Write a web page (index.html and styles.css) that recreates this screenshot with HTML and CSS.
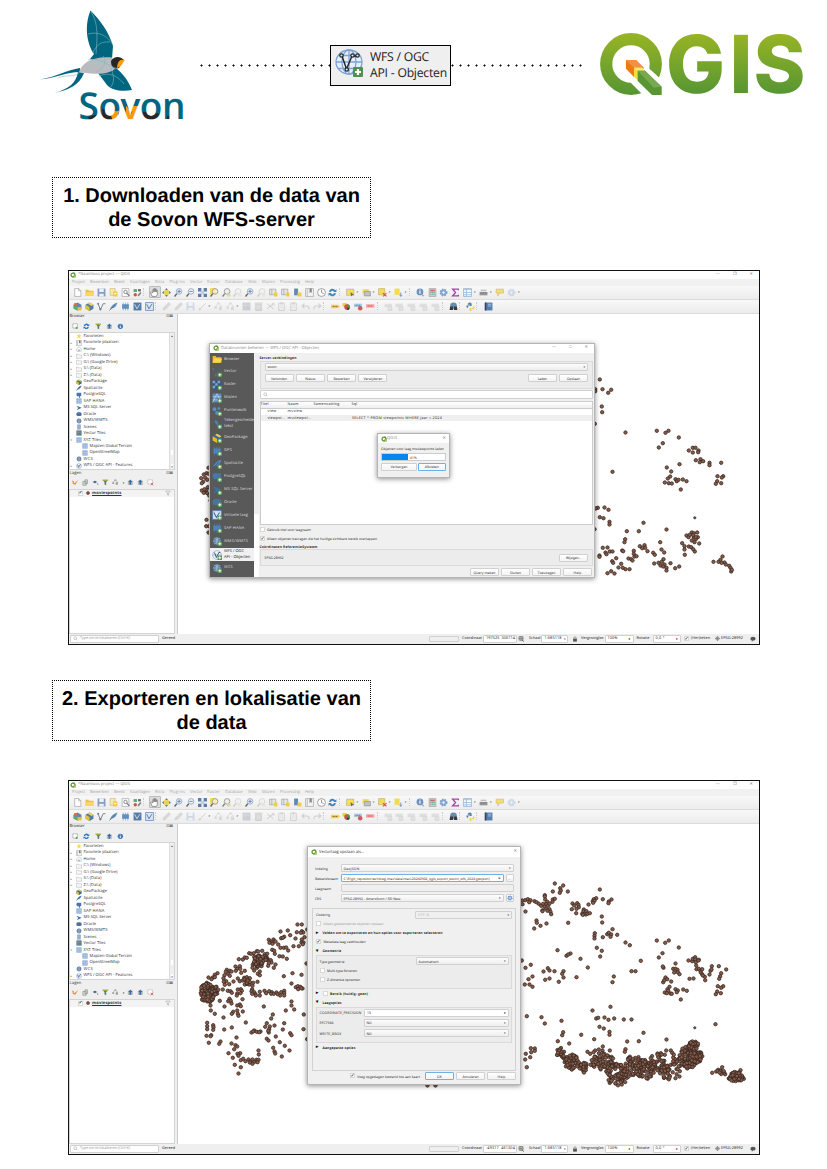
FILE: index.html
```html
<!DOCTYPE html>
<html lang="nl">
<head>
<meta charset="utf-8">
<title>Sovon WFS in QGIS</title>
<link rel="stylesheet" href="styles.css">
</head>
<body>
<header class="top">
  <svg class="sovon" viewBox="38 6 150 118">
    <defs>
      <pattern id="word" patternUnits="userSpaceOnUse" x="70" y="80" width="130" height="50">
        <path d="M0 0h130v50H0z" fill="#00667f"/>
        <path d="M38 31h8v12h-8zM44 32l7-2v12h-7zM56 26h12v16H56zM82 33h4v8h-4z" fill="#f79a0c"/>
        <path d="M18 37l10-3v8H20zM32 29h7l4 13H33zM50 28l-2 7 4 1 2-6zM56 25l6 9-3-11zM73 32l9 0 8 2-2 7H75zM97 36h5v5h-5z" fill="#2a2626"/>
      </pattern>
    </defs>
    <path d="M90.500 10.500C84 26 87 44 94 54L90 59c9 3 17 3 22 0L113 46C109 32 100 20 90.500 10.500z" fill="#00667f"/>
    <path d="M40 79.500C56 77 67 70 80 68L80 72C66 72 56 78 40 79.500zM54 93C69 89 76 83 78 72L84 73C79 86 68 90 54 93z" fill="#00667f"/>
    <path d="M98 73L116 68C123 74 128 80 132 90C122 92 111 90 107 85z" fill="#00667f"/>
    <path d="M79 72C82 63 92 56 112 57.500L117 67C110 75 96 75 79 72z" fill="#b8bcc1"/>
    <path d="M111 61C114 56 120 56 124 60L119 68C114 70 111 67 111 61z" fill="#262626"/>
    <path d="M117 67C118 60 121 59 125 60C122 62 123 66 117 68z" fill="#f79a0c"/>
    <path d="M91 12C99 23 97 40 96 54M88 34C99 31 108 36 113 45M93 53C98 41 105 42 110 42M88 60C100 57 106 65 118 69M96 72C105 69 107 60 103 56M99 76C109 72 117 75 124 84M110 88C116 81 113 74 111 68M58 78C66 74 73 78 79 73" fill="none" stroke="#7fb5c0" stroke-width=".6"/>
    <text class="sovon-word" x="78.500" y="118.500" textLength="107" fill="url(#word)">Sovon</text>
  </svg>
  <div class="dots"></div>
  <div class="wfs-chip">
    <svg viewBox="0 0 28 28" width="28" height="28">
      <g fill="#e6effa" stroke="#7da2d6" stroke-width="1.300"><ellipse cx="14" cy="13" rx="13" ry="12"/><path d="M14 1v24M1 13h26M3 6.500h22M3 19.500h22" /><ellipse cx="14" cy="13" rx="7" ry="12" fill="none"/></g>
      <path d="M7 7l4.500 13L17 7M17 7h6" fill="none" stroke="#222" stroke-width="1.400"/>
      <g fill="#dce8f5" stroke="#222" stroke-width="1.200"><circle cx="6.500" cy="6.500" r="1.700"/><circle cx="11.800" cy="20.500" r="1.700"/><circle cx="17.500" cy="6.500" r="1.700"/><circle cx="22.500" cy="6.500" r="1.700"/></g>
      <rect x="18" y="18" width="10" height="10" rx="1" fill="#4f9150"/><path d="M23 20v6M20 23h6" stroke="#fff" stroke-width="2.200"/>
    </svg>
    <span>WFS / OGC<br>API - Objecten</span>
  </div>
  <div class="dots right"></div>
  <svg class="qgis" viewBox="598 30 208 70">
    <defs>
      <linearGradient id="g" gradientUnits="userSpaceOnUse" x1="0" y1="34" x2="0" y2="94"><stop offset="0" stop-color="#97b424"/><stop offset="1" stop-color="#569633"/></linearGradient>
    </defs>
    <circle cx="631" cy="64" r="24.800" fill="none" stroke="url(#g)" stroke-width="12.200"/>
    <path d="M640 64L647 66.500L664 82V97H645L630 82z" fill="#fff"/>
    <path d="M626 60h10l8 8-10 9-8-8.300z" fill="#ee7913"/><path d="M626 60h10l8 8h-10z" fill="#f19049"/>
    <path d="M634 67.700h8l4 4-8 9-4-4z" fill="#f3dd37"/><path d="M634 67.700h8l4 3.500h-8z" fill="#f7ea72"/>
    <path d="M637.700 70.700h7.300l16.700 16v8.300h-9.700l-14.300-14z" fill="#579632"/><path d="M637.700 70.700h7.300l16.700 16-8 1z" fill="#78a84f"/>
    <g class="qgis-word" fill="url(#g)">
      <text x="666" y="93" textLength="59" lengthAdjust="spacingAndGlyphs">G</text>
      <text x="729.500" y="93" textLength="23" lengthAdjust="spacingAndGlyphs">I</text>
      <text x="753.500" y="93" textLength="52" lengthAdjust="spacingAndGlyphs">S</text>
    </g>
  </svg>
</header>
<main>
  <h2>1. Downloaden van de data van<br>de Sovon WFS-server</h2>
  <section class="app" id="app1"></section>
  <h2 class="second">2. Exporteren en lokalisatie van<br>de data</h2>
  <section class="app" id="app2"></section>
</main>
<script src="app.js"></script>
</body>
</html>
```
FILE: styles.css
```css
* { box-sizing: border-box; }
body { margin: 0; width: 827px; height: 1169px; overflow: hidden; background: #fff; color: #000; font-family: "Liberation Sans", Arial, sans-serif; text-rendering: geometricPrecision; }
svg { display: block; flex: none; }
.top { display: flex; align-items: flex-start; height: 177px; padding: 6px 0 0 38px; }
.sovon { width: 150px; height: 118px; margin-right: 11.500px; }
.sovon-word { font: 600 37px "Open Sans", sans-serif; }
.dots { width: 130.500px; height: 3px; margin-top: 57.500px; background: radial-gradient(circle at 1.500px 1.500px, #111 .8px, transparent 1.300px) 0 0 / 8px 3px; }
.dots.right { width: 131px; }
.wfs-chip { display: flex; align-items: flex-start; gap: 7px; width: 121px; height: 41px; margin-top: 39px; padding: 3px 0 0 4px; background: #efefef; border: 1px solid #000; white-space: nowrap; }
.wfs-chip span { font: 12.200px/16.300px "Open Sans", sans-serif; color: #222; letter-spacing: -.22px; }
.qgis { width: 208px; height: 70px; margin: 24px 0 0 16px; }
.qgis-word { font: 800 80px Inter, sans-serif; }
h2 { width: 319px; height: 61px; margin: 0 0 32px 52px; padding: 6px 0 0; border: 1px dotted #000; text-align: center; font-size: 20px; line-height: 24px; white-space: nowrap; }
h2.second { margin-bottom: 39px; }

.app { position: relative; display: flex; flex-direction: column; width: 692px; height: 375px; margin: 0 0 35px 68px; border: 1px solid #111; background: #fff; overflow: hidden; font: 4.100px/6px "Open Sans", sans-serif; color: #333; white-space: nowrap; }
[data-w] { padding-top: 1.200px; }
.row { display: flex; align-items: center; }
.grow { flex: 1; }
.title { height: 7.500px; padding-left: 1px; gap: 2px; color: #888; }
.winbtns { display: flex; gap: 13px; margin-left: auto; padding-right: 6px; color: #777; }
.menu { height: 7px; background: #f1f1f1; padding-left: 3px; color: #aaa; }
.bar { height: 14px; background: linear-gradient(#f8f8f8, #ececec); border-bottom: 1px solid #dcdcdc; padding-left: 3px; }
.ic { width: 11.880px; height: 12px; display: flex; align-items: center; justify-content: center; flex: none; opacity: .88; }
.ic svg { width: 9px; height: 9px; }
.ic.on { background: #d8d8d8; border: 1px solid #b5b5b5; border-radius: 1px; }
.sep { width: 5.600px; height: 8px; border-left: 1px dotted #ccc; flex: none; }
.arr { width: 4.200px; flex: none; font-size: 3px; color: #555; }
.ic.fade { opacity: .28; }
.work { display: flex; flex: 1; min-height: 0; background: #efefef; }
.side { width: 106px; display: flex; flex-direction: column; margin-right: 1.500px; }
.side > * { flex: none; }
.head { height: 6.500px; justify-content: space-between; padding: 0 2px 0 .5px; }
.tools { height: 11.800px; gap: 4.600px; padding-left: 3px; }
.tools svg { width: 6.700px; height: 6.700px; }
.tools.tight { gap: 3.400px; }
.tools i { font-size: 3px; }
.tree { height: 138.500px; display: flex; background: #fff; border: 1px solid #d4d4d4; }
.items { flex: 1; padding-top: .4px; }
.item { height: 6.470px; padding-left: 5.500px; gap: 2px; }
.item svg { width: 6px; height: 6px; }
.item.sub { padding-left: 11.500px; }
.item i { width: 0; margin-left: -5px; margin-right: 3px; font-size: 3px; font-style: normal; color: #777; }
.scroll { width: 5px; background: #eee; display: flex; flex-direction: column; justify-content: space-between; align-items: center; font-size: 3px; border-left: 1px solid #ddd; }
.scroll::before { content: "▴"; height: 5px; }
.scroll::after { content: "▾"; height: 5px; background: #fff; box-shadow: 0 -14px #fff; }
.side .layers { flex: 1; background: #fff; border: 1px solid #d4d4d4; }
.layer { height: 7px; gap: 2.500px; padding: 0 3px 0 8px; background: #f3f3f3; }
.layer b { text-decoration: underline; flex: none; }
.map { flex: 1; background: #fff; border-left: 1px solid #ccc; overflow: hidden; }
.map svg { width: 583px; height: 319px; }
.status { height: 10.500px; background: #efefef; font-size: 3.800px; color: #222; padding-left: 1px; }
.status > * { flex: none; }
.field { display: flex; align-items: center; justify-content: space-between; height: 7.700px; padding: 0 2px; border: 1px solid #d0d0d0; border-radius: 1px; background: #fff; flex: none; }
.field em { font-style: normal; font-size: 3px; color: #333; }
.field.wide { width: 89px; justify-content: flex-start; gap: 2px; }
.combo { background: linear-gradient(#fdfdfd, #eee); }
.off { background: #efefef; color: #aaa; }
.focus { border-color: #6bb2ea; background: #fff; }
.btn { display: flex; align-items: center; justify-content: center; height: 8px; border: 1px solid #d0d0d0; border-radius: 1px; background: linear-gradient(#fff, #f3f3f3); flex: none; }
.btn.focus { border-color: #6bb2ea; }
.chk { width: 5px; height: 5px; border: 1px solid #d8d8d8; background: #fff; flex: none; display: flex; align-items: center; justify-content: center; font: bold 5px/4px "DejaVu Sans", sans-serif; color: #000; }

.dlg { position: absolute; display: flex; flex-direction: column; background: #f0f0f0; border: 1px solid #b5b5b5; box-shadow: 0 1px 5px rgba(0,0,0,.45); font-size: 3.400px; color: #222; }
.dlg .title { flex: none; height: 9px; padding-left: 3px; gap: 2px; background: #fff; font-size: 4.100px; }
.dlg .title svg { width: 6px; height: 6px; }
.dlg .close { padding-right: 3px; }
.source { left: 140px; top: 71.500px; width: 386px; height: 235.500px; }
.source .cols { display: flex; flex: 1; min-height: 0; }
.prov { width: 43.500px; background: #595959; color: #ddd; font-size: 4px; }
.prov .row { height: 12.930px; padding-left: 1.500px; gap: 2.500px; line-height: 6px; overflow: hidden; }
.prov .two { height: 14.300px; }
.prov svg { width: 10px; height: 10px; }
.prov .sel { background: #f0f0f0; color: #222; height: 13.600px; }
.prov-scroll { width: 5px; background: linear-gradient(#eee 72%, #fff 72%); }
.panel { flex: 1; padding: 1.500px 1px 0 1px; display: flex; flex-direction: column; min-width: 0; }
.panel > * { flex: none; }
.panel .cap { height: 6.500px; font-weight: 700; display: flex; align-items: center; }
.box { border: 1px solid #dadada; background: #ececec; }
.conn { height: 28.500px; padding: 1.500px 4px 0 4px; display: flex; flex-direction: column; gap: 3.500px; }
.conn .row { gap: 2.300px; }
.search { height: 8.500px; margin-top: 1px; justify-content: flex-start; }
.search svg { width: 5px; height: 5px; }
.list { height: 124px; margin-top: 2px; background: #fff; border: 1px solid #ccc; font-size: 3.700px; }
.list .row { height: 6.400px; }
.list .hd { height: 7px; background: linear-gradient(#fff, #eee); border-bottom: 1px solid #ccc; }
.list .row > span { flex: none; }
.c1 { width: 27px; } .c2 { width: 26px; } .c3 { width: 38px; }
.shade { background: #efefef; }
.opt { height: 9.200px; gap: 2px; padding: 1px 0 0 .5px; }
.crs { height: 16.500px; padding: 0 4px; justify-content: space-between; }
.foot { gap: 2px; justify-content: flex-end; padding: 2px 1px 0 0; height: 11px; }
.prog { left: 307.500px; top: 162px; width: 73.500px; height: 44.500px; }
.prog .in { padding: 2px 3.500px 0; display: flex; flex-direction: column; gap: 1.300px; }
.prog .meter { height: 8px; display: flex; align-items: center; border: 1px solid #ccc; background: linear-gradient(90deg, #0a84ee 41%, #fff 41%); padding-left: 28px; }
.prog .row { gap: .5px; }
.export { left: 238px; top: 65px; width: 214px; height: 239px; }
.export .title { color: #333; height: 10px; margin-bottom: 6px; }
.export .r { height: 10.050px; display: flex; align-items: center; padding: 0 6px 0 7px; gap: 2px; }
.export .r > .lbl { width: 23.500px; flex: none; }
.export .adv { height: 163px; margin: 4.500px 4px 0; padding: 1.500px 3px 0; border: 1px solid #d2d2d2; background: #f0f0f0; }
.adv .row { height: 9px; gap: 2.500px; }
.adv .row > .far { margin-left: auto; }
.adv .sub { height: 33.500px; padding: 0 2.500px; }
.adv .sub2 { height: 36px; padding: 0 2.500px; }
.adv .sub2 .row { height: 10.100px; }
.adv .first { height: 10px; }
.tri { width: 4px; font-size: 4.500px; color: #000; }
.bold { font-weight: 700; }
.light { color: #999; }
.export .foot { padding: 0 4px 0 0; height: 10.500px; }
```
FILE: app.js
```js
// ---- icons, all on a 16 x 16 grid ----
const I = {
  q: '<path d="M8 1a7 7 0 1 0 4 12.800l2 1.700 1.500-2L14 12A7 7 0 0 0 8 1z" fill="#589632"/><circle cx="8" cy="8" r="3.600" fill="#fff"/><path d="M8 8h3l4 5-2 2z" fill="#b9c92e"/>',
  page: '<path d="M3 1h7l4 4v10H3z" fill="#fff" stroke="#888"/><path d="M10 1v4h4" fill="none" stroke="#888"/>',
  folder: '<path d="M1 3h5l1 2h8v9H1z" fill="#f0b91d"/><path d="M3 7h13l-2 7H1z" fill="#fcd353"/>',
  gfolder: '<path d="M1 3h5l1 2h8v9H1z" fill="#f7f7f7" stroke="#999"/>',
  save: '<path d="M1 1h14v14H1z" fill="#7593bd"/><path d="M4 1h8v6H4zM4 10h8v5H4z" fill="#edf1f6"/>',
  newl: '<path d="M2 1h9v12H2z" fill="#f7e9a8" stroke="#c9a93a"/><path d="M7 6h8v9H7z" fill="#f4c634"/><path d="M9 10h4" stroke="#fff" stroke-width="2"/>',
  find: '<path d="M2 1h12v14H2z" fill="#fff" stroke="#888"/><circle cx="8" cy="7" r="3" fill="none" stroke="#666" stroke-width="1.500"/><path d="M10 9l5 5" stroke="#666" stroke-width="2"/>',
  style: '<path d="M1 2h6v5H1z" fill="#459e5b"/><path d="M9 2h5v4H9z" fill="#555"/><circle cx="4" cy="12" r="3" fill="#cf3d2c"/><path d="M9 14l5-6" stroke="#777" stroke-width="3"/>',
  hand: '<path d="M4 15L1 8l2-1 2 2V3h2v4-6h2v6-5h2v5-3h2v8l-2 3z" fill="#fff" stroke="#444"/>',
  pan: '<path d="M8 0l3 4H5zM8 16l3-4H5zM0 8l4-3v6zM16 8l-4-3v6z" fill="#4c73a6"/><path d="M4 4h8v8H4z" fill="#f2cd2b"/>',
  zin: '<circle cx="9" cy="6" r="5" fill="#e7edf7" stroke="#8a9fbe" stroke-width="1.500"/><path d="M6 6h6M9 3v6" stroke="#456fa8" stroke-width="1.500"/><path d="M5 10l-4 5" stroke="#555" stroke-width="2.500"/>',
  zout: '<circle cx="9" cy="6" r="5" fill="#eef2f7" stroke="#889ebb" stroke-width="1.500"/><path d="M6 6h6" stroke="#456fa8" stroke-width="1.500"/><path d="M5 10l-4 5" stroke="#555" stroke-width="2.500"/>',
  full: '<path d="M0 0h6v6H0zM10 0h6v6h-6zM0 10h6v6H0zM10 10h6v6h-6z" fill="#496da0"/><path d="M5 5h6v6H5z" fill="#b8c8de"/>',
  zsel: '<path d="M0 0h10v11H0z" fill="#f6d83d"/><circle cx="9" cy="6" r="5" fill="#f7ecae" stroke="#888" stroke-width="1.500"/><path d="M5 10l-4 5" stroke="#555" stroke-width="2.500"/>',
  zlay: '<circle cx="9" cy="6" r="5" fill="#eee" stroke="#888" stroke-width="1.500"/><path d="M5 10l-4 5" stroke="#777" stroke-width="2.500"/><path d="M9 10h6v5H9z" fill="#ded695"/>',
  map: '<path d="M1 2h11v10H1z" fill="#e5e5e5" stroke="#888"/><path d="M5 2v10" stroke="#888"/><path d="M9 8h6v7H9z" fill="#f0c831"/>',
  mark: '<path d="M2 1h7v12H2z" fill="#4b79b6"/><path d="M8 8h7v7H8z" fill="#f0c831"/>',
  book: '<path d="M1 1h14v14H1z" fill="#f3f3f3" stroke="#888"/><path d="M8 1h4v8l-2-2-2 2z" fill="#777"/><path d="M4 2v12" stroke="#888"/>',
  clock: '<circle cx="8" cy="8" r="7" fill="#fff" stroke="#777" stroke-width="1.300"/><path d="M8 3v5l4 2" fill="none" stroke="#777" stroke-width="1.500"/>',
  ref: '<path d="M2 7a6 6 0 0 1 11-3l2-2v5h-6l2-1a4 4 0 0 0-6 1zM14 9a6 6 0 0 1-11 3l-2 2V9h6l-2 1a4 4 0 0 0 6-1z" fill="#2d78be"/>',
  sel: '<path d="M1 2h13v11H1z" fill="#f6df3c" stroke="#777" stroke-dasharray="2 1"/><path d="M8 7l6 5-3 1-2 2z" fill="#555"/>',
  form: '<path d="M1 2h11v8H1z" fill="#f1d749"/><path d="M4 6h11v8H4z" fill="#bbb" stroke="#777"/>',
  desel: '<path d="M1 1h11v11H1z" fill="#f1d749" stroke="#b5a23d"/><path d="M9 9l6 6M15 9l-6 6" stroke="#d23b3b" stroke-width="2"/>',
  selv: '<path d="M1 1h9v11H1z" fill="#f5d92d"/><path d="M12 8v6M10 12l2 3 2-3" stroke="#567eb0" fill="none" stroke-width="1.500"/>',
  info: '<circle cx="7" cy="7" r="6" fill="#5b86bd"/><path d="M7 5v5M7 2.500v1.500" stroke="#fff" stroke-width="2"/><path d="M9 9l6 5-3 1z" fill="#999"/>',
  dot: '<circle cx="8" cy="8" r="6.500" fill="#427eba"/><path d="M8 7v5M8 4v1.500" stroke="#fff" stroke-width="2"/>',
  calc: '<path d="M2 1h12v14H2z" fill="#ccc" stroke="#888"/><path d="M4 3h8v3H4z" fill="#ce5555"/><path d="M4 8h8M4 11h8" stroke="#4ba080" stroke-width="2" stroke-dasharray="2 1"/>',
  gear: '<circle cx="8" cy="8" r="5.500" fill="#7ba2d3" stroke="#6990c5" stroke-width="3" stroke-dasharray="2.500 2"/><circle cx="8" cy="8" r="2" fill="#fff"/>',
  sum: '<path d="M13 4V2H3l5 6-5 6h10v-2" fill="none" stroke="#9c2fa0" stroke-width="2.500"/>',
  table: '<path d="M1 1h14v14H1z" fill="#fff" stroke="#5d89bd"/><path d="M1 3h14M1 8h14M1 12h14M6 1v14" stroke="#8cb0da" stroke-width="1.500"/>',
  rule: '<path d="M1 7h14v6H1z" fill="#888"/><path d="M3 4h10M4 7v3M8 7v3M12 7v3" stroke="#666"/>',
  tip: '<path d="M2 2h13v7H8l-3 5V9H2z" fill="#f4dc5b" stroke="#c0ad55"/>',
  globe: '<circle cx="8" cy="8" r="6.500" fill="#55779f"/><path d="M2 8h12M8 2v12M4 4q4 3 8 0M4 12q4-3 8 0" fill="none" stroke="#c8d7e8"/>',
  layers: '<path d="M1 5l7-4 7 4v7l-7 3-7-3z" fill="#4d78ad"/><path d="M1 5l7 4v6l-7-4z" fill="#4ba154"/><path d="M8 9h7v6H8z" fill="#e7b52d"/><path d="M2 2h5v5H2z" fill="#d55b38"/>',
  gpkg: '<path d="M8 1l7 4v7l-7 4-7-4V5z" fill="#3c6a9e"/><path d="M1 5l7 4v7l-7-4z" fill="#e4bb23"/><path d="M8 1l7 4-3 2-7-4z" fill="#f1d24d"/>',
  vec: '<path d="M2 3l4 11 5-11h4" fill="none" stroke="#4c6678" stroke-width="1.500"/><circle cx="2" cy="3" r="1.700" fill="#668"/><circle cx="6" cy="13" r="2" fill="#668"/>',
  feather: '<path d="M1 15C3 8 7 3 15 1 14 7 10 11 4 12z" fill="#5289bf"/><path d="M1 15L11 5" stroke="#345"/>',
  chip: '<path d="M2 4h12v8H2z" fill="#4c83ba"/><path d="M4 1v14M8 1v14M12 1v14" stroke="#4c83ba"/>',
  vl: '<path d="M1 1h14v14H1z" fill="#416b9c"/><path d="M3 4l4 8 5-8" fill="none" stroke="#dfe9f4" stroke-width="1.500"/>',
  vlw: '<path d="M1 1h14v14H1z" fill="#dbe6f2" stroke="#5b83b1" stroke-width="1.500"/><path d="M3 4l4 8 5-8" fill="none" stroke="#3a6698" stroke-width="1.700"/>',
  pencil: '<path d="M2 14l1-4 9-9 3 3-9 9z" fill="#999" stroke="#666"/>',
  line: '<path d="M2 14L14 2" stroke="#777" stroke-width="1.500"/><circle cx="3" cy="13" r="2" fill="#888"/>',
  nodes: '<path d="M2 9l6-7 6 6" fill="none" stroke="#777"/><path d="M1 8h4v4H1zM9 8h5v6H9zM6 1h4v3H6z" fill="#999"/>',
  cut: '<path d="M2 3l11 9M2 12l11-9" stroke="#555" stroke-width="1.500"/><circle cx="13" cy="4" r="2" fill="none" stroke="#555"/>',
  trash: '<path d="M3 4h10v11H3zM1 2h14" fill="#aaa" stroke="#666" stroke-width="1.500"/>',
  paste: '<path d="M3 2h10v13H3z" fill="#eee" stroke="#777" stroke-width="1.500"/><path d="M6 1h4v3H6zM5 7h6M5 10h6" fill="#777" stroke="#999"/>',
  undo: '<path d="M6 3L2 7l4 4M2 7h8q5 0 4 6" fill="none" stroke="#777" stroke-width="2"/>',
  redo: '<path d="M10 3l4 4-4 4M14 7H6q-5 0-4 6" fill="none" stroke="#777" stroke-width="2"/>',
  tag: '<path d="M0 5h13l3 3-3 3H0z" fill="#f0cf27"/><path d="M3 8h8" stroke="#665b20" stroke-width="2" stroke-dasharray="2 1"/>',
  tagr: '<path d="M0 4h15v6H0z" fill="#f79a9a"/><path d="M3 7h8" stroke="#d33" stroke-width="2" stroke-dasharray="2 1"/>',
  tagb: '<path d="M0 3h14v6H0z" fill="#9cc3e0"/><path d="M3 6h8" stroke="#468" stroke-width="1.500" stroke-dasharray="2 1"/><circle cx="11" cy="11" r="4" fill="#cb4747"/>',
  pie: '<path d="M1 2h8v6H1z" fill="#edc928"/><circle cx="9" cy="9" r="5" fill="#c93a32"/><path d="M9 9V4a5 5 0 0 1 5 5z" fill="#398b46"/><path d="M9 14a5 5 0 0 0 5-4H9z" fill="#222"/>',
  tagg: '<path d="M1 3h13v6H1z" fill="#aaa"/><path d="M7 8h7v7H7z" fill="#bbb" stroke="#888"/>',
  bino: '<circle cx="8" cy="7" r="6" fill="#537fa8"/><path d="M2 8h5v6H1zM9 8h5l1 6H9z" fill="#222"/>',
  py: '<path d="M3 3q5-4 7 0v4H6q-3 0-3 4-3-2-2-5h6V5H3z" fill="#3872a3"/><path d="M13 7q4 2 1 6H9v2h3q-4 3-6-1v-3h4q3 0 3-4z" fill="#f2cf43"/>',
  note: '<path d="M1 1h14v14H1z" fill="#3f6fa8"/><path d="M3 1v14" stroke="#222" stroke-width="2"/><path d="M7 4h6M7 7h6" stroke="#a5bfdd" stroke-width="1.500"/>',
  star: '<path d="M8 1l2 5h5l-4 3 2 6-5-3-5 3 2-6-4-3h5z" fill="#f7d94c"/>',
  home: '<path d="M2 7l6-5 6 5v7H2z" fill="#fff" stroke="#888"/><path d="M6 9h4v5H6z" fill="#aaa"/>',
  filt: '<path d="M1 2h14L10 8v7l-4-2V8z" fill="#5c7c75"/><path d="M1 2h14v2H1z" fill="#c9b944"/>',
  filto: '<path d="M2 3h12L9 8v6l-2-1V8z" fill="#fff" stroke="#777"/>',
  up: '<path d="M2 4h12v10H2z" fill="#bbb"/><path d="M8 1l5 6h-3v7H6V7H3z" fill="#356ba9"/>',
  add: '<path d="M2 2h11v10H2z" fill="#fff" stroke="#777"/><path d="M11 9v6M8 12h6" stroke="#4e9d4e" stroke-width="2"/>',
  rem: '<path d="M2 2h11v10H2z" fill="#fff" stroke="#999"/><path d="M9 9l6 6M15 9l-6 6" stroke="#d33" stroke-width="1.500"/>',
  pg: '<path d="M2 2h12v8l-3 1v4H8v-4L4 12 1 8z" fill="#4a77aa"/>',
  grid: '<path d="M1 1h14v14H1z" fill="#7fa4d2"/><path d="M6 1v14M11 1v14M1 6h14M1 11h14" stroke="#e8eff8"/>',
  ms: '<path d="M1 2l14 5-13 7 4-6z" fill="#426f9f"/>',
  ora: '<rect x="1" y="3" width="14" height="10" rx="4" fill="#4b7399"/>',
  scn: '<path d="M4 2h8v12H4z" fill="#9eb1c9" stroke="#6c86a8"/>',
  vt: '<path d="M1 1h14v14H1z" fill="#69788a"/><path d="M1 6h14M6 1v14" stroke="#9cabbd"/>',
  ras: '<path d="M1 1h14v14H1z" fill="#36587f"/><path d="M1 1h4v4H1zM9 1h4v4H9zM5 5h4v4H5zM1 9h4v4H1z" fill="#7aa4d6"/>',
  mesh: '<path d="M1 1h14v14H1z" fill="#5f8ec1"/><path d="M1 15L8 1l7 14M1 6h14M1 11h14" fill="none" stroke="#cbdcf0"/>',
  pts: '<circle cx="4" cy="5" r="3" fill="#5d8fc7"/><circle cx="11" cy="4" r="2" fill="#5d8fc7"/><circle cx="8" cy="11" r="3" fill="#5d8fc7"/>',
  comma: '<path d="M5 2q8 1 3 12 1-6-2-7-3-2-1-5z" fill="#4d82bb"/>',
  wfs: '<circle cx="8" cy="8" r="7" fill="#eaf1fa" stroke="#7da2d6"/><path d="M1 8h14" stroke="#7da2d6"/><path d="M4 4l3 8 4-8h2" fill="none" stroke="#333" stroke-width="1.300"/>',
  broom: '<path d="M1 7l5 3 9-8-7 12-6-2z" fill="#e2953a"/><path d="M1 5l4 3" stroke="#c33" stroke-width="2"/>',
  grp: '<path d="M2 6h8v9H2zM7 2h6v9H7z" fill="#ddd" stroke="#7d8f7d" stroke-width="1.500"/>',
  eye: '<path d="M1 7q6-6 12 0-6 6-12 0z" fill="#8aa9cc"/><circle cx="7" cy="7" r="2" fill="#345"/><path d="M12 11h3v3h-3z" fill="#888"/>',
  lock: '<path d="M3 7h10v8H3z" fill="#555"/><path d="M5 7V4q3-4 6 0v3" fill="none" stroke="#555" stroke-width="1.500"/>',
  glass: '<circle cx="7" cy="7" r="4.500" fill="none" stroke="#999" stroke-width="1.500"/><path d="M10 10l4 4" stroke="#999" stroke-width="1.500"/>',
  bub: '<path d="M8 2q7 0 7 5t-7 5l-3 3v-3q-4-1-4-5 0-5 7-5z" fill="#555"/>',
  cross: '<path d="M3 1h10v10H3zM1 6h14M8 0v13" fill="#ddd" stroke="#555" stroke-width="1.500"/><path d="M11 10l4 5" stroke="#333" stroke-width="2"/>',
  crs: '<circle cx="8" cy="8" r="5.500" fill="#ccc" stroke="#666" stroke-width="1.500"/><path d="M8 0v16M0 8h16" stroke="#666" stroke-width="1.500"/>'
};
const plus = '<path d="M9 9h7v7H9z" fill="#4f9150"/><path d="M12.500 10v5M10 12.500h5" stroke="#fff" stroke-width="1.500"/>';
const ic = (n, s = 0, extra = '') => `<svg viewBox="0 0 16 16"${s ? ` width="${s}" height="${s}"` : ''}>${I[n]}${extra}</svg>`;
// text fitted to a measured width in px
const t = (s, w, c = '') => `<span${c ? ` class="${c}"` : ''}${w ? ` data-w="${w}"` : ''}>${s}</span>`;
const gap = w => `<span style="width:${w}px"></span>`;

function bar(spec) {
  return `<div class="row bar">${spec.split(' ').map(k => {
    if (k === '|') return '<i class="sep"></i>';
    if (k === 'v') return '<i class="arr">▾</i>';
    const off = k[0] === '-', on = k[0] === '+';
    return `<span class="ic${off ? ' fade' : ''}${on ? ' on' : ''}">${ic(k.replace(/[-+]/, ''))}</span>`;
  }).join('')}</div>`;
}

const bar1 = 'page folder save newl find style | +hand pan zin zout full zsel zlay -zlay zin -zlay map map mark book clock ref | sel v form v desel v selv v | info calc gear sum table v rule v tip -gear v';
const bar2 = 'layers gpkg vec feather chip vl vlw | -pencil -pencil -save -line v -nodes -nodes v -vt -trash -cut -paste -paste -undo -redo | tag pie tagb tagr | -tagg -tagg -tagg -tagg -tagg | bino | py | note';

const menu = [['Project', 3, 13], ['Bewerken', 21, 19], ['Beeld', 45, 10.5], ['Kaartlagen', 61, 20], ['Extra', 86, 9], ['Plug-ins', 100.5, 15.5], ['Vector', 121, 12.5], ['Raster', 138, 13], ['Database', 156, 17.5], ['Web', 179, 8.5], ['Mazen', 193, 13], ['Processing', 211, 20], ['Help', 236, 9]];
const tree = [['star', 'Favorieten', 20], ['book', 'Favoriete plaatsen', 35, 1], ['home', 'Home', 12, 1], ['gfolder', 'C:\\ (Windows)', 27, 1], ['gfolder', 'G:\\ (Google Drive)', 34, 1], ['gfolder', 'S:\\ (Data)', 18, 1], ['gfolder', 'Z:\\ (Data)', 18, 1], ['gpkg', 'GeoPackage', 23.5], ['feather', 'SpatiaLite', 19], ['pg', 'PostgreSQL', 22.5], ['grid', 'SAP HANA', 21], ['ms', 'MS SQL Server', 28], ['ora', 'Oracle', 12.5], ['globe', 'WMS/WMTS', 24], ['scn', 'Scenes', 13], ['vt', 'Vector Tiles', 22], ['grid', 'XYZ Tiles', 17.5, 2], ['grid', 'Mapzen Global Terrain', 42.5, 3], ['grid', 'OpenStreetMap', 30, 3], ['globe', 'WCS', 9.5], ['wfs', 'WFS / OGC API - Features', 49, 1]];

function menuHtml() {
  let x = 3, out = '';
  for (const [s, at, w] of menu) {
    if (at > x) out += gap(at - x);
    out += t(s, w);
    x = at + w;
  }
  return out;
}

// ---- observation points: single marks and dense clusters, three units per px ----
let seed = 7;
const rnd = () => (seed = (seed * 16807) % 2147483647) / 2147483647;
function points(str, ox, oy, clusters = []) {
  const p = str.trim().split(/\s+/).map(q => q.split(',').map(Number));
  for (const [cx, cy, rx, ry, n] of clusters)
    for (let i = 0; i < n; i++) {
      const a = rnd() * 6.283, r = Math.sqrt(rnd());
      p.push([cx + Math.cos(a) * r * rx, cy + Math.sin(a) * r * ry]);
    }
  return p.map(([x, y, s]) => `<circle cx="${(x / 3 + ox).toFixed(1)}" cy="${(y / 3 + oy).toFixed(1)}" r="${s || 1.7}"/>`).join('');
}
const right1 = `118,57 104,86 104,92 126,86 152,88 143,97 124,138 125,155 103,190 195,216 289,211 324,211 315,217 355,231 307,248 295,261 385,270 397,262 405,262 414,270 397,276 413,275 406,299 420,296 428,302 418,305 447,307 447,314 482,307 357,311 319,321 332,333 156,334 329,348 322,354 313,366 325,368 334,369 345,356 349,362 367,357 378,362 354,358 361,387 471,347 488,347 484,351 470,362 466,370 482,368 112,442 106,444 132,441 144,448 118,470 129,473 147,484 147,492 102,506 249,487 199,512 235,512 318,507 403,472,1.1 299,545 194,536 192,545 127,562 141,561 117,585 135,576 148,573 156,573 138,581 117,589 185,570 188,572 155,602 158,607 167,593 238,557 252,554 245,563 254,562 261,572 278,577 283,583 303,567 311,576 220,571 220,580 204,594 212,596 222,588 228,587 216,600 182,610 174,621 187,622 195,626 207,626 152,632 141,638 162,639 309,596 281,609 294,607 304,604 312,612 330,608 300,615 318,622 318,630 308,618 344,623 356,618 378,525 394,516 400,518 410,516 384,530 400,530 412,530 394,540 406,536 416,549 402,545 398,524 388,523 406,530 365,548 372,557 385,558 392,560 372,567 403,573 398,566 373,583 459,604 474,604 486,588 480,598 492,606 483,607 496,612 506,616 510,622 512,633 514,628`;
const left1 = `444,82 438,98 430,102 422,113 434,112 428,124 424,128 440,118 444,100 442,140 436,150 424,150 430,157 440,158 446,165 450,180 438,148 432,146 438,238 437,257 446,257 444,276`;
const left2 = `363,192 376,192 312,213 334,210 361,215 376,212 380,216 373,217 341,224 323,229 314,233 319,232 357,234 384,230 392,207 376,237 375,246 381,246 379,251 367,257 351,257 277,238 291,237 283,243 292,243 279,247 288,250 297,243 305,252 287,268 293,271 295,280 312,262 322,262 329,261 335,270 309,287 319,288 331,295 390,309 187,296 199,297 205,291 211,292 218,278 224,280 232,278 233,289 241,272 245,273 257,271 265,281 272,280 269,289 283,299 273,294 285,306 277,308 275,316 297,312 292,322 255,317 229,313 228,322 241,322 233,330 250,333 244,340 250,344 177,318 190,317 182,325 178,331 191,325 205,331 194,337 322,347 348,338 375,343 151,328 148,334 160,331 165,333 155,340 144,344 160,346 141,353 149,362 142,364 123,338 115,343 96,351 109,351 115,350 105,356 91,367 145,373 158,371 171,363 184,354 190,362 203,352 211,350 220,353 199,360 213,362 210,370 205,372 218,372 230,367 243,364 228,376 227,386 139,387 154,391 162,392 166,397 184,387 193,386 196,391 182,399 192,398 181,405 225,392 233,395 227,400 237,401 238,405 250,394 250,405 264,391 269,398 278,392 286,395 284,400 292,400 300,396 304,401 314,395 323,391 323,398 311,405 323,405 345,369 358,380 364,377 371,379 378,384 365,386 374,383 198,416 159,415 155,422 163,421 165,429 130,421 144,438 182,435 190,432 193,437 262,438 328,450 345,423 345,435 353,447 382,462 102,435 103,450 115,460 141,471 182,450 170,454 166,460 184,460 199,453 186,466 289,462 284,474 271,488 92,487 92,497 92,506 110,494 111,500 110,508 143,507 166,501 208,486 266,499 280,498 278,506 294,495 277,516 275,511 323,488 319,507 341,518 345,524 381,506 90,526 104,524 102,527 225,516 233,510 230,513 241,514 252,513 248,515 298,528 180,531 97,547 132,543 128,550 165,549 177,554 182,558 173,566 271,535 276,540 310,545 325,556 290,562 294,573 296,579 339,570 316,588 156,578 191,578 183,580 186,586 169,592 246,570 247,582 193,599 200,595 207,602 216,597 222,602 228,597 234,604 240,598 246,598 228,610 220,606 243,605 175,613 193,620 186,639 392,536`;
const right2 = `133,69 158,75 127,93 149,83 151,90 148,97 172,93 268,87 303,117 295,123 294,128 277,116 257,113 250,116 247,122 252,121 248,127 234,132 274,168 275,186 186,129 200,128 204,133 191,135 205,140 198,145 184,146 197,158 220,147 219,152 228,152 215,160 226,162 231,160 238,158 217,163 35,120 44,119 52,116 60,119 36,131 56,125 72,122 78,125 85,130 92,136 103,104 103,108 104,117 110,124 98,130 107,131 102,139 113,135 127,117 133,115 126,124 117,129 96,149 107,145 117,146 111,151 120,154 122,161 96,152 45,153 78,180 79,187 90,196 108,189 71,204 173,187 253,218 252,226 252,234 277,230 290,221 295,217 302,222 300,229 306,206 320,223 345,246 358,254 259,262 274,271 269,288 141,269 168,286 180,279 173,282 210,295 232,321 391,301 439,240 475,240 464,247 505,261 456,278 445,291 459,322 495,309 488,325 495,325 501,328 491,336 502,335 507,341 457,318 465,351 458,365 461,359 470,356 482,363 477,379 471,386 463,396 473,391 469,398 480,399 484,400 495,386 502,390 499,395 518,387 529,391 511,417 534,300 545,302 547,295 554,290 554,297 565,298 556,305 564,300 557,315 558,326 565,325 570,331 575,326 571,336 575,341 583,349 584,359 577,345 600,331 604,317 603,327 597,342 625,317 647,327 632,338 629,347 626,355 537,355 549,354 622,377 638,377 632,382 620,393 616,401 631,398 34,300 45,322 61,313 66,348 54,356 43,372 57,372 66,379 99,333 112,323 117,330 132,332 104,358 117,354 159,332 155,340 159,351 145,364 198,350 363,332 375,332 310,348 306,365 49,467 93,470 103,489 153,481 212,523 158,515 155,524 142,542 176,549 251,536 246,450 300,439 257,474 263,472 282,471 294,478 311,474 340,477 363,477 267,499 280,504 297,514 297,523 399,517 350,543 385,542 468,537 615,491 553,502,1.1 61,563 73,564 73,571 62,575 59,590 46,580 44,597 49,620 298,570 345,566 343,574 231,574 239,580 254,570 265,567 277,558 276,570 249,575 467,570 481,570 485,577 451,578 463,583 502,598 496,608 508,632 495,653 507,648 605,637 617,633 623,628 635,620 630,630 640,636 644,641 655,654 663,640 670,640 690,629 700,655`;
const dense2 = [[150, 580, 12, 18, 22], [184, 605, 23, 23, 55], [220, 623, 13, 18, 22], [275, 606, 36, 29, 62], [320, 642, 36, 33, 90], [370, 618, 33, 32, 66], [405, 626, 28, 30, 55], [442, 604, 24, 27, 40], [465, 638, 17, 24, 32], [495, 612, 15, 33, 16], [534, 590, 28, 34, 130], [550, 555, 16, 13, 35], [557, 589, 22, 17, 40], [676, 650, 21, 16, 42], [630, 636, 14, 6, 8]];
const dense1 = [[92, 398, 23, 29, 115], [116, 390, 11, 12, 16], [252, 302, 22, 18, 40], [211, 362, 12, 11, 7], [235, 315, 13, 12, 8]];

function mapSvg(n) {
  const marks = n === 1
    ? points(right1, 560, 360) + points(left1, 60, 440)
    : points(left2, 176, 350, dense1) + points(right2, 510, 350, dense2) + points('381,735 405,735', 300, 330);
  return `<svg viewBox="177.500 313.500 583 319"><g fill="#8d5c48" stroke="#352a25" stroke-width=".8">${marks}</g></svg>`;
}

function app(n, coordinate, dialogs) {
  return `
  <div class="row title">${ic('q', 6)}${t('*Naamloos project — QGIS', 52)}<span class="winbtns"><span>—</span><span>❐</span><span>✕</span></span></div>
  <div class="row menu">${menuHtml()}</div>
  ${bar(bar1)}${bar(bar2)}
  <div class="work">
    <div class="side">
      <div class="row head">${t('Browser', 15)}<span>⊡⊠</span></div>
      <div class="row tools">${['add', 'ref', 'filt', 'up', 'dot'].map(k => ic(k)).join('')}</div>
      <div class="tree"><div class="items">${tree.map(([k, s, w, m]) => `<div class="row item${m === 3 ? ' sub' : ''}">${m === 1 ? '<i>▸</i>' : m === 2 ? '<i>▾</i>' : ''}${ic(k)}${t(s, w)}</div>`).join('')}</div><div class="scroll"></div></div>
      <div class="row head">${t('Lagen', 12)}<span>⊡⊠</span></div>
      <div class="row tools tight">${['broom', 'grp', 'eye', 'filt', 'nodes'].map(k => ic(k)).join('')}<i>▾</i>${['up', 'up', 'rem'].map(k => ic(k)).join('')}</div>
      <div class="layers"><div class="row layer"><span class="chk">✓</span><svg viewBox="0 0 16 16" width="4" height="4"><circle cx="8" cy="8" r="6" fill="#8a5845" stroke="#422" stroke-width="2"/></svg><b data-w="29.500">moviespoints</b><span class="grow"></span>${ic('filto', 6)}</div></div>
    </div>
    <div class="map">${mapSvg(n)}</div>
  </div>
  <div class="row status">
    <span class="field wide">${ic('glass', 5)}${t('Type om te lokaliseren (Ctrl+K)', 50, 'light')}</span>${gap(3)}${t('Gereed', 13)}${gap(254)}
    <span class="field off" style="width:30px;height:6px"></span>${gap(3)}${t('Coördinaat', 20)}${gap(1)}<span class="field" style="width:34px">${t(coordinate, 29)}</span>${gap(1)}${ic('cross', 6)}${gap(5)}${t('Schaal', 11.5)}${gap(1)}
    <span class="field" style="width:27px">${t('1:685118', 17)}<em>▾</em></span>${gap(4)}${ic('lock', 6)}${gap(2.5)}${t('Vergrootglas', 22.5)}${gap(1)}<span class="field" style="width:29px">${t('100%', 10)}<em>⬍</em></span>${gap(3)}${t('Rotatie', 13)}${gap(3)}
    <span class="field" style="width:28.500px">${t('0,0 °', 9)}<em>⬍</em></span>${gap(3)}<span class="chk">✓</span>${gap(2)}${t('(Her)teken', 19)}${gap(5)}${ic('crs', 5)}${gap(1)}${t('EPSG:28992', 22)}${gap(7)}${ic('bub', 6)}
  </div>${dialogs}`;
}

const btn = (s, w, tw, c = '') => `<span class="btn ${c}" style="width:${w}px">${t(s, tw)}</span>`;
const provs = [['folder', 'Browser', 15.5], ['vec', 'Vector', 12.5], ['ras', 'Raster', 12], ['mesh', 'Mazen', 13], ['pts', 'Puntenwolk', 22.5], ['comma', 'Tekengescheide<br>tekst', 0, 'two'], ['gpkg', 'GeoPackage', 23.5], ['chip', 'GPS', 8], ['feather', 'SpatiaLite', 19], ['pg', 'PostgreSQL', 22], ['ms', 'MS SQL Server', 28.5], ['ora', 'Oracle', 12.5], ['vlw', 'Virtuele laag', 24], ['chip', 'SAP HANA', 20.5], ['globe', 'WMS/WMTS', 24], ['wfs', 'WFS / OGC<br>API - Objecten', 0, 'sel'], ['globe', 'WCS', 9]];

const dlg1 = `
<div class="dlg source">
  <div class="row title">${ic('q')}${t('Databronnen beheren — WFS / OGC API - Objecten', 98)}<span class="winbtns"><span>—</span><span>□</span><span>✕</span></span></div>
  <div class="cols">
    <div class="prov">${provs.map(([k, s, w, c]) => `<div class="row ${c || ''}">${ic(k, 0, k === 'folder' ? '' : plus)}${t(s, w)}</div>`).join('')}</div>
    <div class="prov-scroll"></div>
    <div class="panel">
      <div class="cap">${t('Server-verbindingen', 37)}</div>
      <div class="box conn">
        <div class="field combo">${t('sovon', 9)}<em>▾</em></div>
        <div class="row">${btn('Verbinden', 29, 16)}${btn('Nieuw', 29, 10)}${btn('Bewerken', 29, 16)}${btn('Verwijderen', 29, 19)}<span class="grow"></span>${btn('Laden', 29, 9)}${btn('Opslaan', 29, 13)}</div>
      </div>
      <div class="field search">${ic('glass')}</div>
      <div class="list">
        <div class="row hd"><span class="c1">${t('Titel', 8)}</span><span class="c2">${t('Naam', 11)}</span><span class="c3">${t('Samenvatting', 26)}</span>${t('Sql', 6)}</div>
        <div class="row">${gap(7)}<span style="width:20px">${t('view', 9)}</span>${t('msview', 15)}</div>
        <div class="row shade">${gap(7)}<span style="width:20px">${t('viewpoi...', 17.5)}</span><span style="width:64.5px">${t('msviewpoi...', 24)}</span>${t('SELECT * FROM viewpoints WHERE jaar = 2024', 90)}</div>
      </div>
      <div class="row opt"><span class="chk"></span>${t('Gebruik titel voor laagnaam', 44)}</div>
      <div class="row opt"><span class="chk">✓</span>${t('Alleen objecten bevragen die het huidige zichtbare bereik overlappen', 110)}</div>
      <div class="cap">${t('Coördinaten ReferentieSysteem', 58)}</div>
      <div class="row box crs">${t('EPSG:28992', 19)}${btn('Wijzigen...', 29, 15)}</div>
      <div class="row foot">${btn('Query maken', 29, 22)}${btn('Sluiten', 29, 11)}${btn('Toevoegen', 29, 18)}${btn('Help', 29, 8)}</div>
    </div>
  </div>
</div>
<div class="dlg prog">
  <div class="row title">${ic('q')}${t('QGIS', 10)}<span class="winbtns close">✕</span></div>
  <div class="in">${t('Objecten voor laag msviewpoints laden', 63)}<div class="meter">${t('41%', 7)}</div><div class="row">${btn('Verbergen', 36, 17)}${btn('Afbreken', 28.5, 14, 'focus')}</div></div>
</div>`;

const combo = (s, w, tw, c = 'combo', e = '▾') => `<span class="field far ${c}" style="width:${w}px">${t(s, tw)}<em>${e}</em></span>`;
const dlg2 = `
<div class="dlg export">
  <div class="row title">${ic('q')}${t('Vectorlaag opslaan als...', 45)}<span class="winbtns close">✕</span></div>
  <div class="r"><span class="lbl">${t('Indeling', 13)}</span>${combo('GeoJSON', 173, 16)}</div>
  <div class="r"><span class="lbl">${t('Bestandsnaam', 23)}</span>${combo('C:\\R\\git_repositories\\nbwg-max\\data\\max\\20240902_qgis_export_sovon_wfs_2024.geojson|', 163, 147, 'focus', '⊗')}${btn('...', 8, 3)}</div>
  <div class="r"><span class="lbl">${t('Laagnaam', 16)}</span><span class="field off" style="width:173px"></span></div>
  <div class="r"><span class="lbl">${t('CRS', 6)}</span>${combo('EPSG:28992 - Amersfoort / RD New', 163, 57)}<span class="btn" style="width:8px">${ic('gear', 6)}</span></div>
  <div class="adv">
    <div class="row">${t('Codering', 14)}${combo('UTF-8', 97, 11, 'off')}</div>
    <div class="row light"><span class="chk"></span>${t('Alleen geselecteerde objecten opslaan', 60)}</div>
    <div class="row bold"><span class="tri">▸</span>${t('Velden om te exporteren en hun opties voor exporteren selecteren', 120)}</div>
    <div class="row"><span class="chk">✓</span>${t('Metadata laag vasthouden', 42)}</div>
    <div class="row bold"><span class="tri">▾</span>${t('Geometrie', 19)}</div>
    <div class="box sub">
      <div class="row first">${t('Type geometrie', 25)}${combo('Automatisch', 93, 20)}</div>
      <div class="row"><span class="chk"></span>${t('Multi-type forceren', 30)}</div>
      <div class="row"><span class="chk"></span>${t('Z-dimensie opnemen', 33)}</div>
    </div>
    <div class="row bold"><span class="tri">▸</span><span class="chk"></span>${t('Bereik (huidig: geen)', 38)}</div>
    <div class="row bold"><span class="tri">▾</span>${t('Laagopties', 19)}</div>
    <div class="box sub2">
      <div class="row">${t('COORDINATE_PRECISION', 42)}${combo('15', 145, 4, '', '⬍')}</div>
      <div class="row">${t('RFC7946', 14)}${combo('NO', 145, 5)}</div>
      <div class="row">${t('WRITE_BBOX', 22)}${combo('NO', 145, 5)}</div>
    </div>
    <div class="row bold"><span class="tri">▸</span>${t('Aangepaste opties', 33)}</div>
  </div>
  <div class="row foot"><span class="chk">✓</span>${t('Voeg opgeslagen bestand toe aan kaart', 63)}${gap(1)}${btn('OK', 29, 5, 'focus')}${btn('Annuleren', 29, 16)}${btn('Help', 29, 8)}</div>
</div>`;

document.getElementById('app1').innerHTML = app(1, '197525&nbsp; 306714', dlg1);
document.getElementById('app2').innerHTML = app(2, '-49317&nbsp; 461304', dlg2);

// spread letters so each label takes its stated width
document.querySelectorAll('[data-w]').forEach(el => {
  el.style.display = 'block';
  el.style.flex = 'none';
  el.style.width = 'max-content';
  const d = (el.dataset.w - el.getBoundingClientRect().width) / el.textContent.length;
  el.style.letterSpacing = d.toFixed(3) + 'px';
});
```
